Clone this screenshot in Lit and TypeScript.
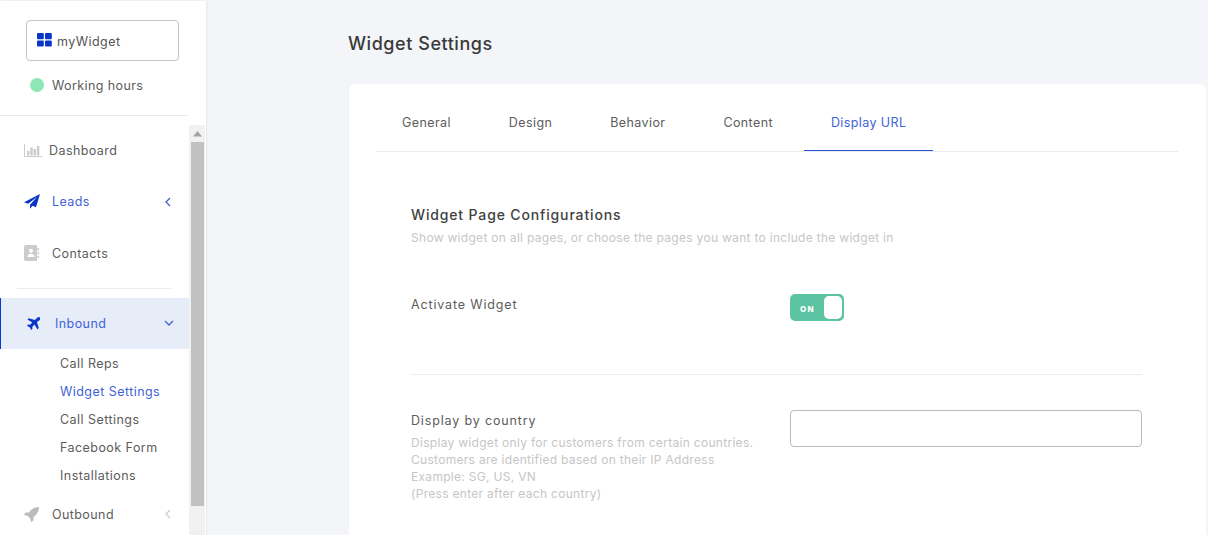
import { LitElement, html, css } from "lit";
import { customElement } from "lit/decorators.js";

const chevLeft = (c: string) => html`<svg class="chev" width="10" height="12" viewBox="0 0 10 12"><path d="M7 2 3 6l4 4" fill="none" stroke="${c}" stroke-width="1.3"/></svg>`;

@customElement("app-root")
export class AppRoot extends LitElement {
  static styles = css`
    :host { display: block; width: 1208px; height: 535px; overflow: hidden; background: #f3f5f9; font-family: Inter, "Noto Sans", sans-serif; color: #555; }
    .page { display: flex; height: 535px; }
    .side { width: 206px; flex: none; background: #fff; box-shadow: 1px 0 2px rgba(0,0,0,.06); display: flex; flex-direction: column; overflow: hidden; margin-top: 1px; }
    .top { padding: 19px 0 0 17px; height: 115px; flex: none; box-sizing: border-box; width: 188px; border-bottom: 1px solid #e9e9ec; }
    .wbtn { margin-left: 9px; width: 153px; height: 41px; box-sizing: border-box; border: 1px solid #c3c3cc; border-radius: 4px; display: flex; align-items: center; padding: 1px 0 0 10px; gap: 5px; font-size: 12.5px; letter-spacing: .45px; color: #555; }
    .wbtn svg { margin-top: -2px; }
    .hours { display: flex; align-items: center; gap: 8px; margin: 17px 0 0 13px; font-size: 12.5px; letter-spacing: .4px; color: #5c5c5c; }
    .dot { width: 14px; height: 14px; border-radius: 50%; background: #8ee6b5; margin-top: -1px; }
    .scroll { flex: 1; display: flex; margin-top: 9px; min-height: 0; }
    .menu { width: 189px; flex: none; display: flex; flex-direction: column; }
    .bar { width: 16px; flex: none; background: #f1f1f1; display: flex; flex-direction: column; align-items: center; }
    .arrow { height: 17px; display: flex; align-items: center; justify-content: center; }
    .thumb { width: 13px; height: 364px; background: #c1c1c1; }
    .item { display: flex; align-items: center; height: 51px; font-size: 12.5px; letter-spacing: .42px; color: #5c5c5c; padding-left: 24px; position: relative; flex: none; box-sizing: border-box; }
    .item .ic { width: 28px; display: flex; flex: none; }
    .item .ic.dash { width: 25px; }
    .item.tall { height: 52px; }
    .chev { position: absolute; left: 163px; top: 50%; margin-top: -6px; }
    .item.blue { color: #3f63d6; }
    .sep { height: 1px; background: #ececef; margin: 9px 18px 9px 17px; flex: none; }
    .item.active { background: #e6ecf8; border-left: 1px solid #0a3ad0; height: 51px; padding-left: 26px; }
    .active .chev { left: 162px; }
    .sub { display: flex; flex-direction: column; font-size: 12.5px; letter-spacing: .45px; color: #5c5c5c; flex: none; padding: 1px 0 0 60px; }
    .sub div { height: 28px; line-height: 28px; }
    .sub .on { color: #3f63d6; }
    .item.out { height: 48px; }
    .main { flex: 1; padding: 0 2px 0 143px; min-width: 0; }
    h1 { margin: 0 0 0 -1px; font-size: 18px; font-weight: 500; color: #3a3a3a; height: 84px; line-height: 87px; letter-spacing: .55px; }
    .card { background: #fff; border-radius: 6px 6px 0 0; height: 451px; padding: 0 28px 0 27px; box-sizing: border-box; overflow: hidden; }
    .tabs { display: flex; height: 68px; box-sizing: border-box; border-bottom: 1px solid #ececef; gap: 4px; }
    .tab { padding: 0 27px; font-size: 12.5px; letter-spacing: .4px; color: #5c5c5c; line-height: 77px; height: 67px; box-sizing: border-box; }
    .tab:first-child { margin-left: -1px; }
    .tab.on { color: #3f63d6; border-bottom: 1px solid #2a50d6; }
    .body { padding: 0 36px 0 35px; }
    h2 { margin: 0; padding-top: 54px; font-size: 14px; font-weight: 500; color: #3f3f3f; letter-spacing: .85px; line-height: 18px; }
    .hint { font-size: 12px; letter-spacing: .3px; color: #c6c6c6; line-height: 17px; }
    h2 + .hint { margin-top: 5px; }
    .row { display: grid; grid-template-columns: 379px 352px; }
    .row1 { margin-top: 48px; height: 80px; border-bottom: 1px solid #ececef; }
    .lab { font-size: 12.5px; letter-spacing: .85px; color: #5c5c5c; line-height: 18px; }
    .row1 .lab { margin-top: 2px; }
    .tog { width: 54px; height: 27px; box-sizing: border-box; background: #5cc4a3; border-radius: 5px; border: 2px solid #5cc4a3; display: flex; justify-content: space-between; align-items: center; padding: 2px 0 0 8px; color: #fff; font-size: 8px; font-weight: 800; letter-spacing: 1.2px; }
    .knob { width: 18px; height: 23px; background: #fff; border-radius: 5px; margin-top: -2px; }
    .row2 { margin-top: 35px; }
    .row2 .lab { margin: 2px 0 4px; }
    .input { height: 37px; box-sizing: border-box; border: 1px solid #b9b9c0; border-radius: 4px; background: #fff; }
  `;

  render() {
    return html`<div class="page">
      <aside class="side">
        <div class="top">
          <div class="wbtn">
            <svg width="15" height="14" viewBox="0 0 15 14"><g fill="#0a36c8"><rect x="0" y="0" width="6.8" height="6.2" rx="1"/><rect x="8" y="0" width="6.8" height="6.2" rx="1"/><rect x="0" y="7.4" width="6.8" height="6.2" rx="1"/><rect x="8" y="7.4" width="6.8" height="6.2" rx="1"/></g></svg>
            myWidget
          </div>
          <div class="hours"><span class="dot"></span>Working hours</div>
        </div>
        <div class="scroll">
          <div class="menu">
            <div class="item">
              <span class="ic dash"><svg width="18" height="13" viewBox="0 0 18 13"><path d="M.5 0v12.500H18" fill="none" stroke="#ccc"/><g fill="#ccc"><rect x="3" y="7" width="2.400" height="4.500"/><rect x="6.300" y="3.500" width="2.400" height="8"/><rect x="9.600" y="5" width="2.400" height="6.500"/><rect x="12.900" y="2" width="2.400" height="9.500"/></g></svg></span>Dashboard
            </div>
            <div class="item blue">
              <span class="ic"><svg width="16" height="15" viewBox="0 0 16 15"><path d="M16 0 0 8.200l4.200 1.600L13 3 6 10.800v4l2.500-3L12 13.200z" fill="#0a36c8"/></svg></span>Leads${chevLeft("#3f63d6")}
            </div>
            <div class="item tall">
              <span class="ic"><svg width="15" height="16" viewBox="0 0 15 16"><path d="M2 0h11v16H2a2 2 0 0 1-2-2V2a2 2 0 0 1 2-2z" fill="#ccc"/><path d="M13.500 3H15v2.500h-1.500zM13.500 7H15v2.500h-1.500zM13.500 11H15v2.500h-1.500z" fill="#ccc"/><circle cx="7" cy="5.800" r="2" fill="#fff"/><path d="M3.500 12c0-2.300 1.500-3.300 3.500-3.300s3.500 1 3.500 3.300z" fill="#fff"/></svg></span>Contacts
            </div>
            <div class="sep"></div>
            <div class="item blue active">
              <span class="ic"><svg width="13" height="13" viewBox="0 0 13 13"><path d="M13 .6c-.6-.8-2-.7-3 .3L7.800 3.100 1.800 1.300.5 2.600 5.300 5.500 3.100 7.800 1.200 7.500 0 8.700l2.700 1.500L4.300 13l1.200-1.200-.3-1.900 2.300-2.300 3 4.800 1.300-1.300-1.900-6L12.200 3.400c1-1 1.400-2 .8-2.800z" fill="#0a36c8"/></svg></span>Inbound
              <svg class="chev" width="12" height="10" viewBox="0 0 12 10"><path d="M2 3l4 4 4-4" fill="none" stroke="#3f63d6" stroke-width="1.300"/></svg>
            </div>
            <div class="sub">
              <div>Call Reps</div><div class="on">Widget Settings</div><div>Call Settings</div><div>Facebook Form</div><div>Installations</div>
            </div>
            <div class="item out">
              <span class="ic"><svg width="15" height="15" viewBox="0 0 15 15"><path d="M15 0C10.500 0 7.500 2 5 5.500H1.500L0 8l3.500.7 2.800 2.800L7 15l2.500-1.500V10C13 7.500 15 4.500 15 0z" fill="#bbb"/></svg></span>Outbound${chevLeft("#ccc")}
            </div>
          </div>
          <div class="bar">
            <div class="arrow"><svg width="9" height="6" viewBox="0 0 9 6"><path d="M4.500 0 9 5.500H0z" fill="#a3a3a3"/></svg></div>
            <div class="thumb"></div>
          </div>
        </div>
      </aside>
      <main class="main">
        <h1>Widget Settings</h1>
        <section class="card">
          <nav class="tabs">
            <div class="tab">General</div><div class="tab">Design</div><div class="tab">Behavior</div><div class="tab">Content</div><div class="tab on">Display URL</div>
          </nav>
          <div class="body">
            <h2>Widget Page Configurations</h2>
            <div class="hint">Show widget on all pages, or choose the pages you want to include the widget in</div>
            <div class="row row1">
              <div class="lab">Activate Widget</div>
              <div><div class="tog">ON<span class="knob"></span></div></div>
            </div>
            <div class="row row2">
              <div>
                <div class="lab">Display by country</div>
                <div class="hint">Display widget only for customers from certain countries.<br>Customers are identified based on their IP Address<br>Example: SG, US, VN<br>(Press enter after each country)</div>
              </div>
              <div class="input"></div>
            </div>
          </div>
        </section>
      </main>
    </div>`;
  }
}
